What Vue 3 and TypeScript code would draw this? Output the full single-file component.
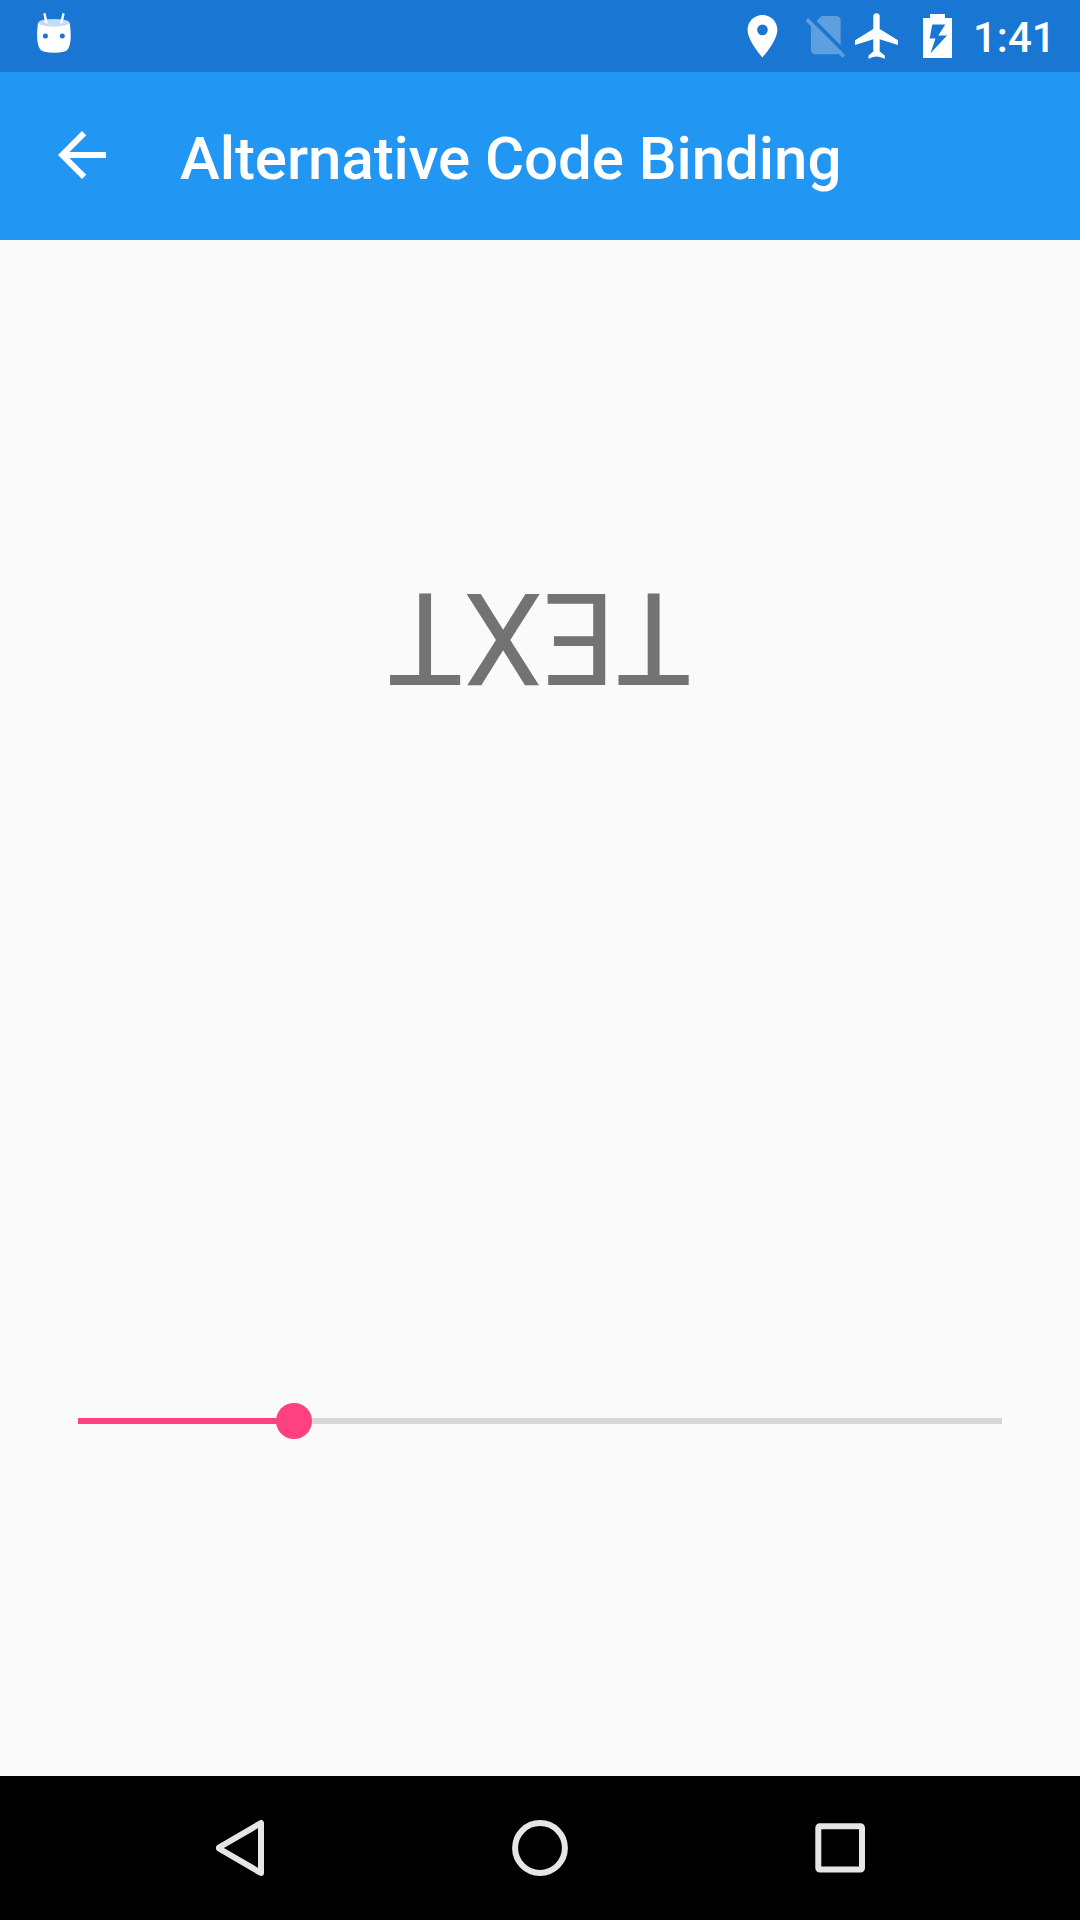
<script setup lang="ts">
import { computed, ref } from 'vue'

const title = 'Alternative Code Binding'
const clock = '1:41'
const value = ref(216)
const max = 924
const percent = computed(() => `${(value.value / max) * 100}%`)
</script>

<template>
  <div class="screen">
    <header class="status">
      <svg class="droid" viewBox="0 0 40 48" width="40" height="48">
        <path d="M10.600 4.200l1.500 7M29.400 4.200l-1.700 7" stroke="#fff" stroke-width="2.400" stroke-linecap="round" fill="none" />
        <path d="M4 13C3 20 2 33 6 39Q8 42.8 20 42.8Q32 42.8 34 39C38 33 36.700 20 35.700 13Z" fill="#fff" />
        <ellipse cx="19.900" cy="12.800" rx="15.600" ry="3.900" fill="#c7dcf4" />
        <path d="M11.700 9.500l.6 2.800M28.100 9.500l-.7 2.800" stroke="#fff" stroke-width="2.400" stroke-linecap="round" fill="none" />
        <circle cx="11.400" cy="26" r="2.500" fill="#1976d2" />
        <circle cx="28.300" cy="26" r="2.500" fill="#1976d2" />
      </svg>
      <svg class="icons" viewBox="730 0 230 72" width="230" height="72" fill="#fff">
        <path transform="translate(736.9 10.700) scale(2.13)" d="M12 2C8.130 2 5 5.130 5 9c0 5.250 7 13 7 13s7-7.750 7-13c0-3.870-3.130-7-7-7zm0 9.500a2.500 2.500 0 0 1 0-5 2.500 2.500 0 0 1 0 5z" />
        <path transform="translate(800.300 9.700) scale(2.125)" fill-opacity="0.3" d="M18.990 5c0-1.100-.89-2-1.990-2h-7L7.660 5.340 19 16.680 18.990 5zM3.650 3.880L2.380 5.150 5 7.770V19c0 1.100.9 2 2 2h10.010c.35 0 .67-.1.960-.26l1.880 1.880 1.270-1.270L3.650 3.880z" />
        <path d="M873.300 29V16.400a3.200 3.200 0 0 1 6.400 0V29L898 40.300V45L879.700 39.300V51.500L884.800 55.500V58.800Q880.800 56.700 876.500 56.500Q872.200 56.700 868.500 58.800V55.500L873.300 51.500V39.300L855 45V40.300Z" />
        <path fill-rule="evenodd" d="M930 14h15v4h7v40h-29V18h7ZM932.300 24.500L929.700 38.500H935.500L930.500 53.300L947 35.500H938.300L945.300 24.500Z" />
      </svg>
      <span class="clock">{{ clock }}</span>
    </header>

    <div class="toolbar">
      <svg class="back" viewBox="0 0 24 24" width="72" height="72" fill="#fff">
        <path d="M20 11H7.830l5.590-5.590L12 4l-8 8 8 8 1.410-1.410L7.830 13H20v-2z" />
      </svg>
      <h1 class="title">{{ title }}</h1>
    </div>

    <main class="content">
      <div class="stage"><span class="label">TEXT</span></div>
      <div class="slider-row">
        <div class="track">
          <div class="fill" :style="{ width: percent }"></div>
          <div class="thumb" :style="{ left: percent }"></div>
        </div>
      </div>
    </main>

    <nav class="nav">
      <svg viewBox="0 0 60 60" width="60" height="60"><path d="M51 5V55L9 30.500V29.500Z" /></svg>
      <svg viewBox="0 0 60 60" width="60" height="60"><circle cx="30" cy="30" r="24.900" /></svg>
      <svg viewBox="0 0 60 60" width="60" height="60"><rect x="8.300" y="8.300" width="43.700" height="43.200" rx="1.500" /></svg>
    </nav>
  </div>
</template>

<style>
body { margin: 0; }
</style>

<style scoped>
.screen {
  width: 1080px;
  height: 1920px;
  display: flex;
  flex-direction: column;
  overflow: hidden;
  background: #fafafa;
  font-family: Roboto, "Liberation Sans", sans-serif;
}
.status {
  height: 72px;
  flex: none;
  display: flex;
  background: #1976d2;
  color: #fff;
}
.droid { margin: 10px 0 0 34px; }
.icons { margin-left: 656px; }
.clock {
  margin-left: 13px;
  font-size: 42px;
  font-weight: 500;
  line-height: 76px;
}
.toolbar {
  height: 168px;
  flex: none;
  display: flex;
  background: #2196f3;
}
.back { margin: 47px 0 0 46px; }
.title {
  margin: 0 0 0 62px;
  padding-top: 51px;
  font-size: 60px;
  font-weight: 500;
  line-height: 72px;
  letter-spacing: -0.07px;
  color: #fff;
  white-space: nowrap;
}
.content {
  flex: 1;
  display: flex;
  flex-direction: column;
}
.stage {
  height: 794px;
  padding-right: 1px;
  display: flex;
  align-items: center;
  justify-content: center;
}
.label {
  font-size: 127.6px;
  line-height: 150px;
  color: #737373;
  transform: rotate(180deg);
}
.slider-row {
  padding: 384px 78px 0;
}
.track {
  position: relative;
  height: 6px;
  background: #d6d6d6;
}
.fill {
  height: 6px;
  background: #ff4081;
}
.thumb {
  position: absolute;
  top: -15px;
  width: 36px;
  height: 36px;
  margin-left: -18px;
  border-radius: 50%;
  background: #ff4081;
}
.nav {
  height: 144px;
  flex: none;
  display: flex;
  align-items: center;
  justify-content: center;
  gap: 240px;
  background: #000;
}
.nav svg {
  fill: none;
  stroke: #e6e6e6;
  stroke-width: 6;
  stroke-linejoin: round;
}
</style>
